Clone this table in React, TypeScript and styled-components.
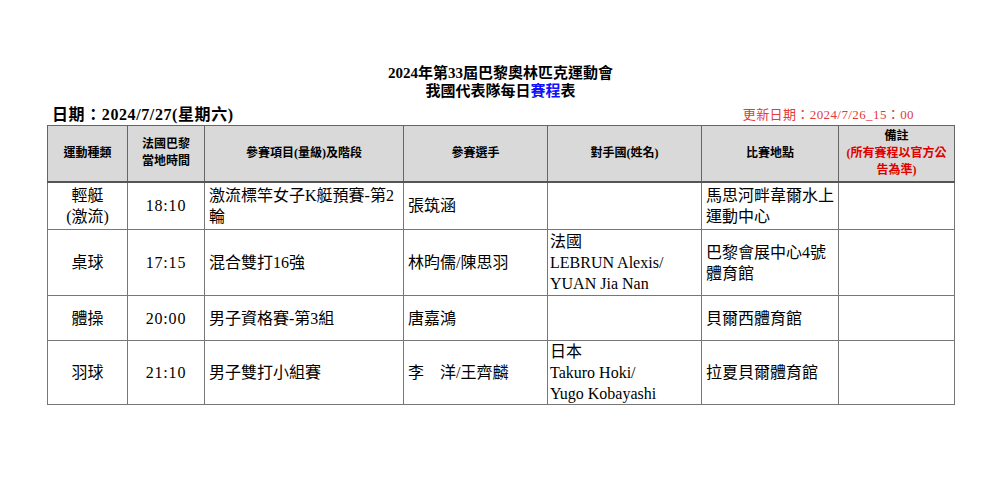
import React from "react";
import styled, { createGlobalStyle } from "styled-components";

const Global = createGlobalStyle`
  html, body { margin: 0; padding: 0; background: #ffffff; }
  body { font-family: "Liberation Serif", "Noto Sans CJK TC", serif; color: #000; }
`;

const Page = styled.div`
  width: 1001px;
  box-sizing: border-box;
  padding: 64px 47px 0 47px;
`;

const TitleBlock = styled.div`
  display: flex;
  flex-direction: column;
  align-items: center;
  font-size: 15px;
  font-weight: 700;
  line-height: 18px;
`;

const Blue = styled.span`
  color: #1010ff;
`;

const InfoBar = styled.div`
  margin-top: 5px;
  display: flex;
  justify-content: space-between;
  align-items: center;
  height: 20px;
  padding: 0 40px 0 5px;
`;

const DateText = styled.div`
  font-size: 16px;
  font-weight: 700;
  line-height: 20px;
  letter-spacing: 0.6px;
`;

const UpdateText = styled.div`
  font-size: 13px;
  color: #e23a3a;
  line-height: 20px;
  letter-spacing: 0.4px;
`;

const Table = styled.table`
  border-collapse: collapse;
  table-layout: fixed;
  width: 907px;
  border: 1px solid #555;
`;

const HeadRow = styled.tr`
  height: 56px;
  background: #d9d9d9;
`;

const HeadCell = styled.th`
  border: 1px solid #666;
  border-bottom: 2px solid #555;
  font-size: 12px;
  font-weight: 700;
  line-height: 17px;
  text-align: center;
  vertical-align: middle;
  padding: 0 2px;
`;

const Red = styled.span`
  color: #e00000;
`;

const Row = styled.tr<{ $h: number }>`
  height: ${(p) => p.$h}px;
`;

const Cell = styled.td<{ $center?: boolean; $pad?: number; $spaced?: boolean }>`
  border: 1px solid #777;
  font-size: 16px;
  line-height: 21px;
  letter-spacing: ${(p) => (p.$spaced ? "0.8px" : "0")};
  text-align: ${(p) => (p.$center ? "center" : "left")};
  vertical-align: middle;
  padding: 0 ${(p) => (p.$center ? 2 : 4)}px 0 ${(p) => (p.$pad ?? (p.$center ? 2 : 4))}px;
  word-break: break-all;
`;

const cols = [80, 77, 199, 144, 154, 137, 116];

type RowData = {
  h: number;
  sport: React.ReactNode;
  time: string;
  event: React.ReactNode;
  athletes: string;
  opponent: React.ReactNode;
  venue: React.ReactNode;
};

const rows: RowData[] = [
  {
    h: 48,
    sport: (
      <>
        輕艇
        <br />
        (激流)
      </>
    ),
    time: "18:10",
    event: "激流標竿女子K艇預賽-第2輪",
    athletes: "張筑涵",
    opponent: "",
    venue: (
      <>
        馬思河畔韋爾水上
        <br />
        運動中心
      </>
    ),
  },
  {
    h: 66,
    sport: "桌球",
    time: "17:15",
    event: "混合雙打16強",
    athletes: "林昀儒/陳思羽",
    opponent: (
      <>
        法國
        <br />
        LEBRUN Alexis/
        <br />
        YUAN Jia Nan
      </>
    ),
    venue: (
      <>
        巴黎會展中心4號
        <br />
        體育館
      </>
    ),
  },
  {
    h: 45,
    sport: "體操",
    time: "20:00",
    event: "男子資格賽-第3組",
    athletes: "唐嘉鴻",
    opponent: "",
    venue: "貝爾西體育館",
  },
  {
    h: 64,
    sport: "羽球",
    time: "21:10",
    event: "男子雙打小組賽",
    athletes: "李　洋/王齊麟",
    opponent: (
      <>
        日本
        <br />
        Takuro Hoki/
        <br />
        Yugo Kobayashi
      </>
    ),
    venue: "拉夏貝爾體育館",
  },
];

export default function App() {
  return (
    <>
      <Global />
      <Page>
        <TitleBlock>
          <div>2024年第33屆巴黎奧林匹克運動會</div>
          <div>
            我國代表隊每日<Blue>賽程</Blue>表
          </div>
        </TitleBlock>
        <InfoBar>
          <DateText>日期：2024/7/27(星期六)</DateText>
          <UpdateText>更新日期：2024/7/26_15：00</UpdateText>
        </InfoBar>
        <Table>
          <colgroup>
            {cols.map((w, i) => (
              <col key={i} style={{ width: w }} />
            ))}
          </colgroup>
          <thead>
            <HeadRow>
              <HeadCell>運動種類</HeadCell>
              <HeadCell>
                法國巴黎
                <br />
                當地時間
              </HeadCell>
              <HeadCell>參賽項目(量級)及階段</HeadCell>
              <HeadCell>參賽選手</HeadCell>
              <HeadCell>對手國(姓名)</HeadCell>
              <HeadCell>比賽地點</HeadCell>
              <HeadCell>
                備註
                <br />
                <Red>
                  (所有賽程以官方公
                  <br />
                  告為準)
                </Red>
              </HeadCell>
            </HeadRow>
          </thead>
          <tbody>
            {rows.map((r, i) => (
              <Row key={i} $h={r.h}>
                <Cell $center>{r.sport}</Cell>
                <Cell $center $spaced>
                  {r.time}
                </Cell>
                <Cell>{r.event}</Cell>
                <Cell>{r.athletes}</Cell>
                <Cell $pad={2}>{r.opponent}</Cell>
                <Cell>{r.venue}</Cell>
                <Cell />
              </Row>
            ))}
          </tbody>
        </Table>
      </Page>
    </>
  );
}
